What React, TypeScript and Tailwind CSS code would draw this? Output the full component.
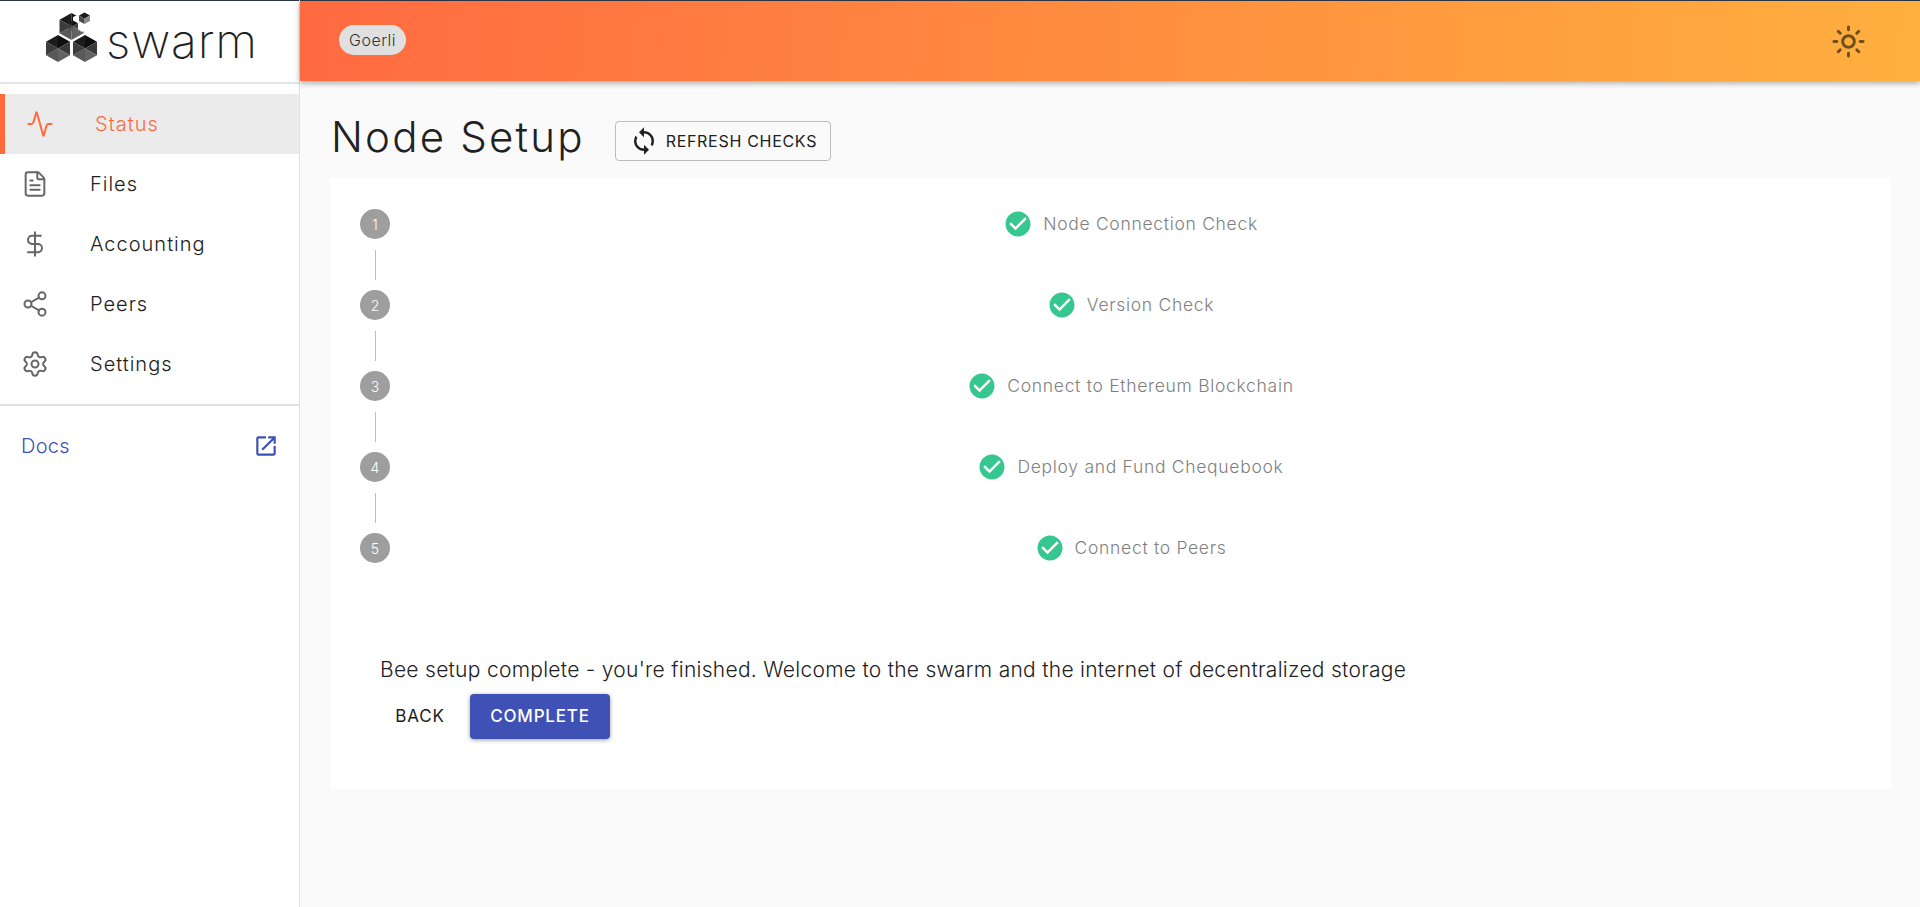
import { Activity, DollarSign, FileText, Settings, Share2, Sun } from 'lucide-react';
import { MdCheckCircle, MdOpenInNew, MdSync } from 'react-icons/md';

const NAV_ITEMS = [
  { label: 'Status', icon: Activity, active: true },
  { label: 'Files', icon: FileText },
  { label: 'Accounting', icon: DollarSign },
  { label: 'Peers', icon: Share2 },
  { label: 'Settings', icon: Settings },
];

const STEPS = [
  'Node Connection Check',
  'Version Check',
  'Connect to Ethereum Blockchain',
  'Deploy and Fund Chequebook',
  'Connect to Peers',
];

const FACET_COLORS = ['#1c1c1c', '#0f0f0f', '#3a3a3a', '#636363', '#585858', '#3c3c3c'];

function Hex({ cx, cy, w = 12, h = 13.5 }: { cx: number; cy: number; w?: number; h?: number }) {
  const pts = [
    [cx - w, cy - h / 2],
    [cx, cy - h],
    [cx + w, cy - h / 2],
    [cx + w, cy + h / 2],
    [cx, cy + h],
    [cx - w, cy + h / 2],
  ];
  return (
    <g>
      {pts.map((p, i) => {
        const next = pts[(i + 1) % pts.length];
        return (
          <polygon
            key={i}
            points={`${cx},${cy} ${p[0]},${p[1]} ${next[0]},${next[1]}`}
            fill={FACET_COLORS[i]}
          />
        );
      })}
    </g>
  );
}

function Logo() {
  return (
    <svg width="52" height="50" viewBox="0 0 52 50" aria-hidden="true" className="-mt-[9px]">
      <Hex cx={25.5} cy={14.5} />
      <polygon points="27,5 39,0 46,5 46,16 36,20 27,14" fill="#fff" />
      <Hex cx={27} cy={14} w={5} h={5.5} />
      <polygon points="33,3.5 38.5,0.5 44,3.5 38.5,6.5" fill="#1a1a1a" />
      <polygon points="38.5,6.5 44,3.5 44,9 38.5,12" fill="#8a8a8a" />
      <polygon points="33,3.5 38.5,6.5 38.5,12 33,9" fill="#4a4a4a" />
      <Hex cx={12} cy={36.5} />
      <Hex cx={39} cy={36.5} />
    </svg>
  );
}

export default function App() {
  return (
    <div className="flex min-h-[907px] bg-[#fafafa] font-['Inter',sans-serif] text-[#212121]">
      <aside className="flex w-[300px] shrink-0 flex-col border-r border-[#e0e0e0] bg-white">
        <div className="flex h-[84px] items-center justify-center gap-[8px] border-b-2 border-[#e5e5e5] border-t border-t-[#2d3444] pl-[5px]">
          <Logo />
          <span className="-mt-[2px] text-[48px] leading-none font-extralight tracking-[0.9px] text-[#222]">
            swarm
          </span>
        </div>
        <nav className="mt-[10px] border-b-2 border-[#e0e0e0] pb-[10px]">
          {NAV_ITEMS.map(({ label, icon: Icon, active }) => (
            <div
              key={label}
              className={`flex h-[60px] items-center ${
                active
                  ? 'border-l-[5px] border-[#ff6a3d] bg-[#ebebeb] pl-[21px] text-[#ff6a3d]'
                  : 'pl-[21px] text-[#212121]'
              }`}
            >
              <Icon size={28} strokeWidth={1.7} className={active ? 'text-[#ff6a3d]' : 'text-[#666]'} />
              <span className="ml-[41px] text-[20px] font-light tracking-[1px]">{label}</span>
            </div>
          ))}
        </nav>
        <div className="flex h-[80px] items-center justify-between pl-[21px] pr-[20px] text-[#3f51b5]">
          <span className="text-[20px] font-light tracking-[0.3px]">Docs</span>
          <MdOpenInNew size={26} />
        </div>
      </aside>

      <div className="flex min-w-0 flex-1 flex-col">
        <header className="flex h-[81px] items-center justify-between border-t border-t-[#2d3444] bg-[linear-gradient(95deg,#ff6a41,#ffb03e)] pl-[39px] pr-[54px] shadow-[0_2px_6px_rgba(0,0,0,0.35)]">
          <span className="mb-[2px] flex h-[30px] items-center rounded-full bg-[#e0e0e0] px-[10px] text-[16px] font-light tracking-[0.5px] text-[#333]">
            Goerli
          </span>
          <Sun size={35} strokeWidth={2} className="text-[#6e4f1c]" />
        </header>

        <main className="flex flex-col pl-[30px] pr-[29px] pt-[26px]">
          <div className="flex items-center gap-[30px] pl-[1px]">
            <h1 className="text-[42px] leading-[60px] font-light tracking-[2.2px]">Node Setup</h1>
            <button
              type="button"
              className="mt-[7px] flex h-[40px] w-[216px] items-center gap-[7px] rounded border border-[#bdbdbd] pl-[13px] text-[16px] font-normal tracking-[0.7px]"
            >
              <MdSync size={30} />
              REFRESH CHECKS
            </button>
          </div>

          <section className="mt-[11px] h-[611px] bg-white pl-[30px] pt-[31px]">
            <div className="flex flex-col">
              {STEPS.map((step, i) => (
                <div key={step}>
                  <div className="flex h-[30px] items-center">
                    <span className="flex size-[30px] shrink-0 items-center justify-center rounded-full bg-[#9e9e9e] text-[14px] font-light text-white">
                      {i + 1}
                    </span>
                    <div className="flex flex-1 items-center justify-center gap-[10px] pr-[20px] text-[#7f7f7f]">
                      <MdCheckCircle size={30} className="text-[#35c78f]" />
                      <span className="text-[17.5px] font-light tracking-[0.7px]">{step}</span>
                    </div>
                  </div>
                  {i < STEPS.length - 1 && (
                    <div className="ml-[15px] flex h-[51px] items-center">
                      <div className="h-[30px] w-px bg-[#bdbdbd]" />
                    </div>
                  )}
                </div>
              ))}
            </div>

            <p className="mt-[91px] pl-[20px] text-[21px] font-light tracking-[0.28px]">
              Bee setup complete - you're finished. Welcome to the swarm and the internet of decentralized storage
            </p>
            <div className="mt-[8px] flex items-center gap-[10px] pl-[20px]">
              <button type="button" className="h-[45px] w-[80px] pt-[2px] text-[17px] font-normal tracking-[0.8px]">
                BACK
              </button>
              <button
                type="button"
                className="h-[45px] w-[140px] rounded bg-[#3f51b5] pt-[2px] text-[17px] font-medium tracking-[0.8px] text-white shadow-[0_1px_4px_rgba(0,0,0,0.4)]"
              >
                COMPLETE
              </button>
            </div>
          </section>
        </main>
      </div>
    </div>
  );
}
